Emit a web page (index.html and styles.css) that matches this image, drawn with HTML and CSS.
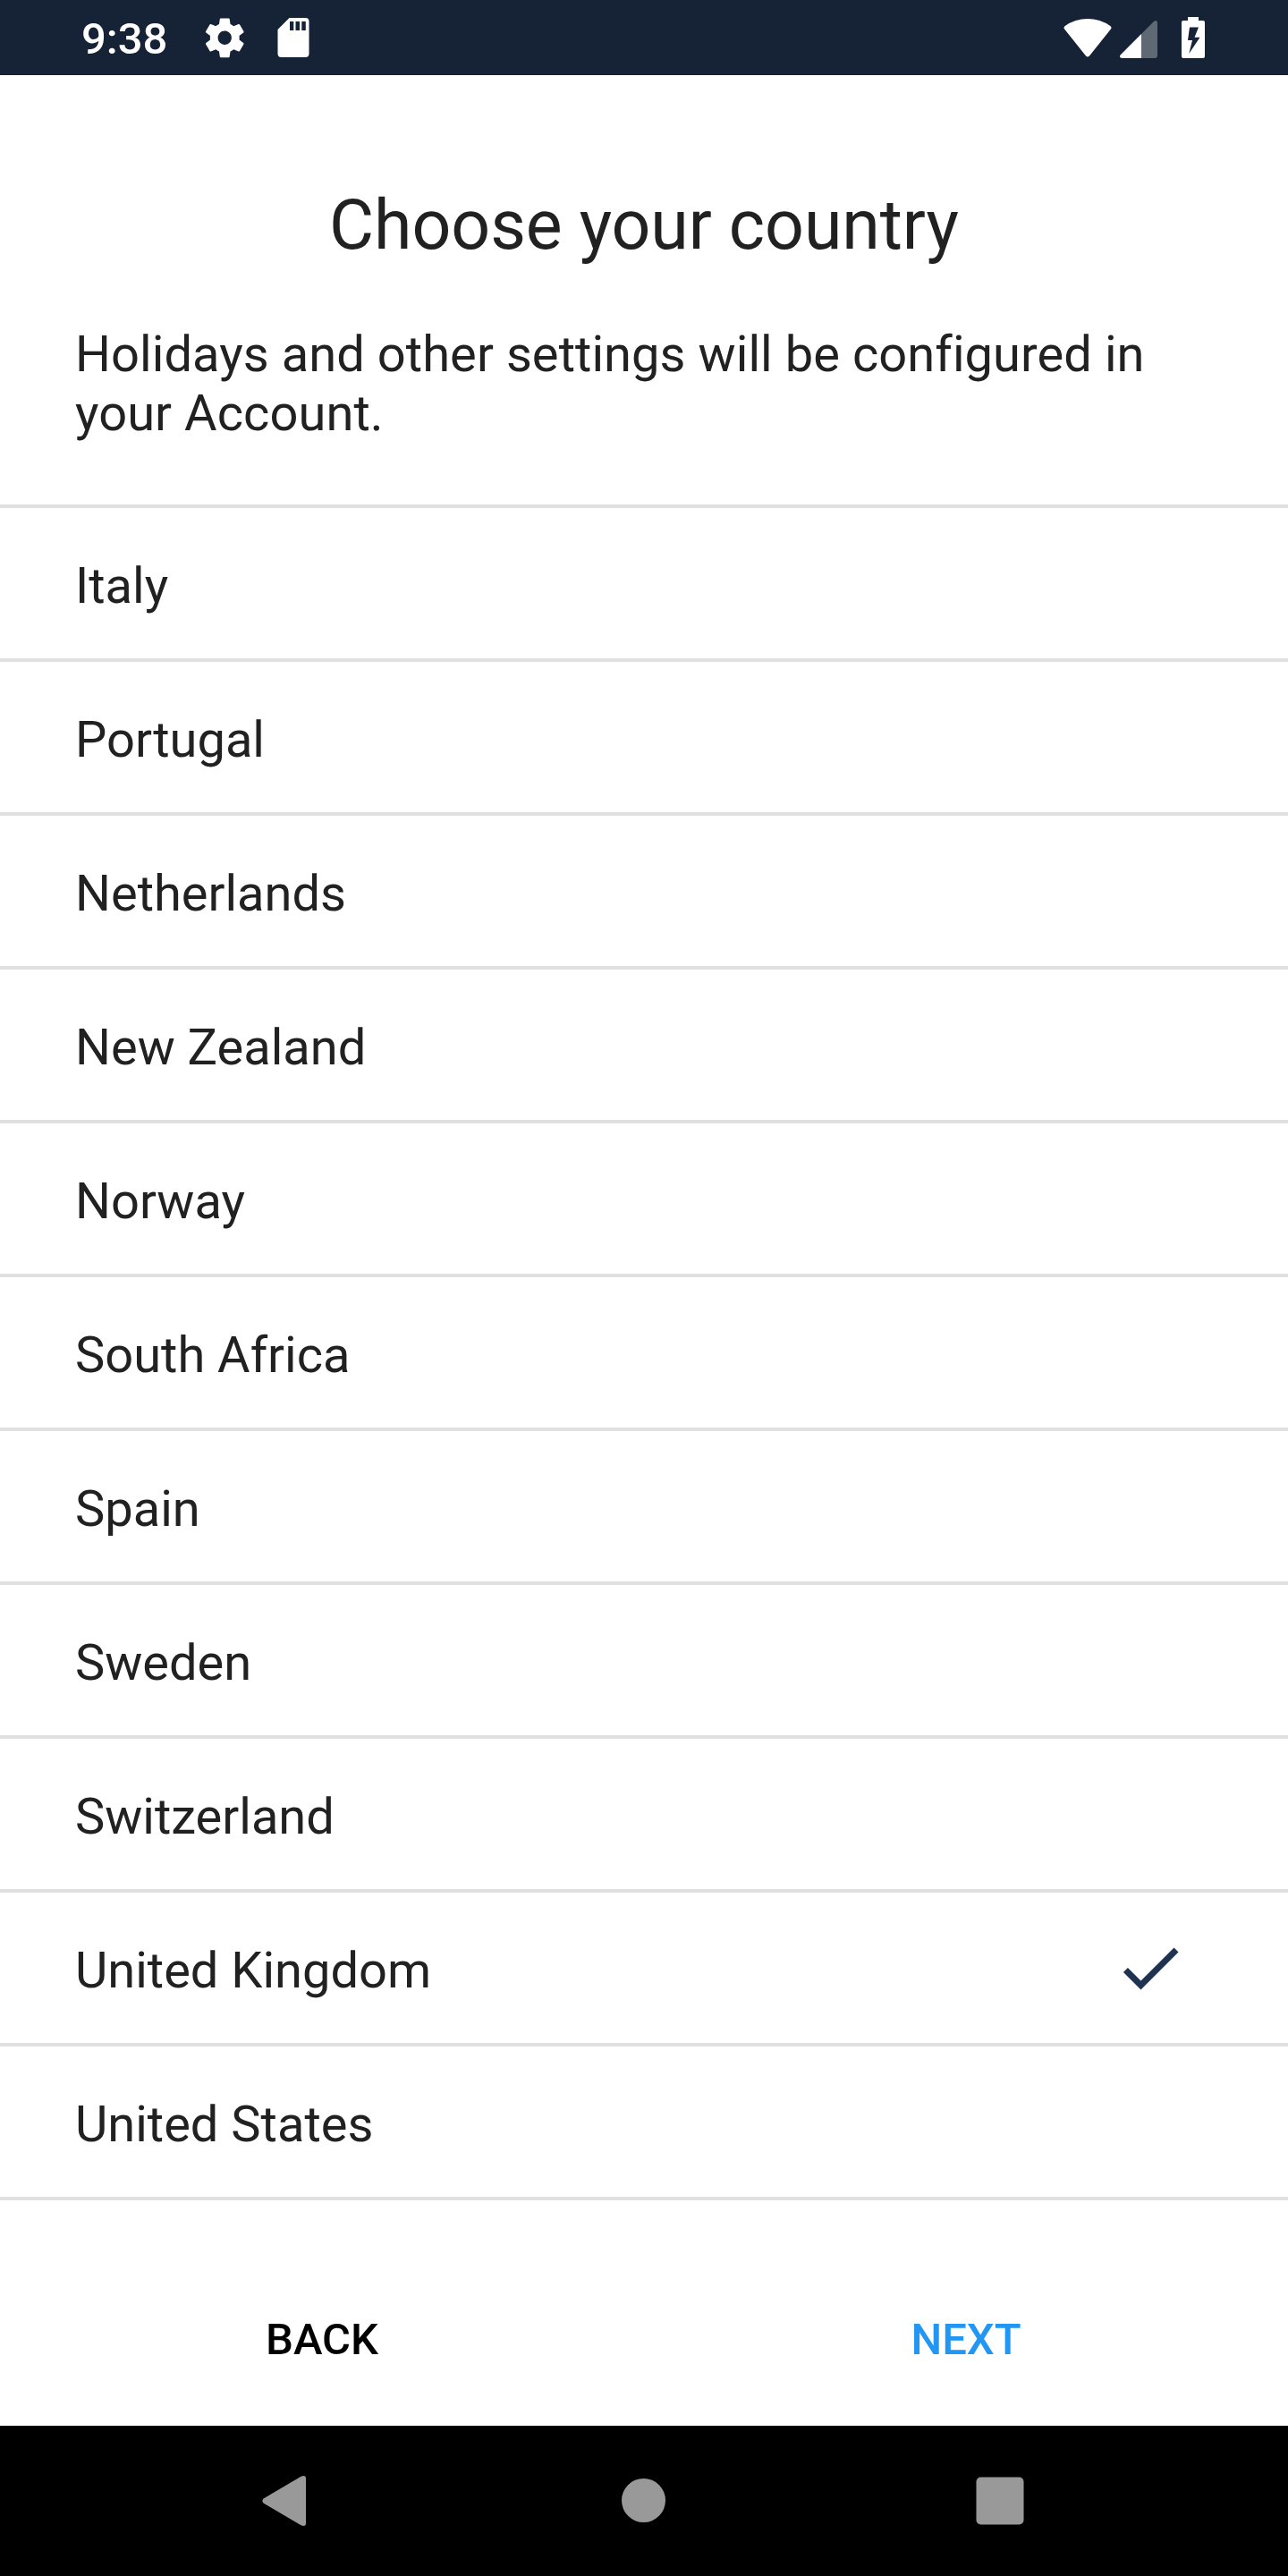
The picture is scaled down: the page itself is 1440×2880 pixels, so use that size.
FILE: index.html
```html
<!DOCTYPE html>
<html lang="en">
<head>
    <meta charset="UTF-8">
    <meta name="viewport" content="width=device-width, initial-scale=1.0">
    <title>Choose your country</title>
    <link rel="stylesheet" href="styles.css">
</head>
<body>

    <header class="status-bar">
        <span class="time">9:38</span>
        <svg class="icon-settings" width="52.5" height="52.5" viewBox="0 0 24 24" fill="#fff">
            <path d="M19.43 12.98c.04-.32.07-.64.07-.98s-.03-.66-.07-.98l2.11-1.65c.19-.15.24-.42.12-.64l-2-3.46c-.12-.22-.39-.3-.61-.22l-2.49 1c-.52-.4-1.08-.73-1.69-.98l-.38-2.65C14.46 2.18 14.25 2 14 2h-4c-.25 0-.46.18-.49.42l-.38 2.65c-.61.25-1.17.59-1.69.98l-2.49-1c-.23-.09-.49 0-.61.22l-2 3.46c-.13.22-.07.49.12.64l2.11 1.65c-.04.32-.07.65-.07.98s.03.66.07.98l-2.11 1.65c-.19.15-.24.42-.12.64l2 3.46c.12.22.39.3.61.22l2.49-1c.52.4 1.08.73 1.69.98l.38 2.65c.03.24.24.42.49.42h4c.25 0 .46-.18.49-.42l.38-2.65c.61-.25 1.17-.59 1.69-.98l2.49 1c.23.09.49 0 .61-.22l2-3.46c.12-.22.07-.49-.12-.64l-2.11-1.65zM12 15.5c-1.93 0-3.5-1.57-3.5-3.5s1.57-3.5 3.5-3.5 3.5 1.57 3.5 3.5-1.57 3.5-3.5 3.5z"/>
        </svg>
        <svg class="icon-sd" width="36" height="44" viewBox="0 0 36 44">
            <path fill="#fff" fill-rule="evenodd" d="M13.5 0H31.500q4 0 4 4V40q0 4-4 4H4.500q-4 0-4-4V13zM14 4v10h4.300V4zM20.500 4v10h4.500V4zM27.300 4v10h4.500V4z"/>
        </svg>
        <div class="status-right">
            <svg width="54" height="44" viewBox="0 0 54 44">
                <path fill="#fff" d="M1.300 11.800Q-.5 9.600 1.700 8Q13 0 27 0T52.300 8Q54.500 9.600 52.700 11.800L29 41.500Q27 43.600 25 41.500z"/>
            </svg>
            <svg class="icon-signal" width="42" height="42" viewBox="0 0 42 42">
                <path fill="#5f6973" d="M24 15L38 1Q42-1.500 42 3V39q0 3-3 3H24z"/>
                <path fill="#fff" d="M24 15V42H2.500Q-1.500 41.500 .8 38.300z"/>
            </svg>
            <svg class="icon-battery" width="26" height="46" viewBox="0 0 26 46">
                <path fill="#fff" fill-rule="evenodd" d="M7 0H19V4H24q2 0 2 2V44q0 2-2 2H2q-2 0-2-2V6q0-2 2-2H7zM9 11.500L7 26H12L8.300 41L20.500 22.700H14.500L19 11.500z"/>
            </svg>
        </div>
    </header>

    <main>
        <h1>Choose your country</h1>
        <p class="description">Holidays and other settings will be configured in your Account.</p>

        <ul class="countries">
            <li>Italy</li>
            <li>Portugal</li>
            <li>Netherlands</li>
            <li>New Zealand</li>
            <li>Norway</li>
            <li>South Africa</li>
            <li>Spain</li>
            <li>Sweden</li>
            <li>Switzerland</li>
            <li class="selected">
                United Kingdom
                <svg width="84" height="84" viewBox="0 0 24 24" fill="#1f3350">
                    <path d="M9 16.170L4.830 12l-1.420 1.410L9 19 21 7l-1.410-1.410z"/>
                </svg>
            </li>
            <li>United States</li>
        </ul>
    </main>

    <div class="actions">
        <button type="button">BACK</button>
        <button type="button" class="next">NEXT</button>
    </div>

    <footer class="nav-bar">
        <svg width="50" height="58" viewBox="0 0 50 58">
            <path fill="#999" d="M1.500 31.500Q-.7 29 1.500 26.500L43.500 1.800Q49 -.5 49 4V54Q49 58.500 43.500 56.200z"/>
        </svg>
        <svg class="icon-home" width="50" height="50" viewBox="0 0 50 50">
            <circle cx="24.5" cy="24.5" r="24.500" fill="#999"/>
        </svg>
        <svg width="54" height="54" viewBox="0 0 54 54">
            <rect x=".5" y=".5" width="53" height="53" rx="5" fill="#999"/>
        </svg>
    </footer>

</body>
</html>
```
FILE: styles.css
```css
* {
    margin: 0;
    padding: 0;
    box-sizing: border-box;
}

body {
    width: 1440px;
    height: 2880px;
    display: flex;
    flex-direction: column;
    font-family: Roboto, sans-serif;
    font-size: 56px;
    line-height: 66px;
    color: #212121;
    background-color: #fff;
}

svg {
    display: block;
    flex-shrink: 0;
}

.status-bar {
    display: flex;
    align-items: center;
    height: 84px;
    padding: 0 93px 0 91px;
    background-color: #162235;
    color: #fff;
}

.time {
    width: 134px;
    font-size: 49px;
    font-weight: 500;
    line-height: 57px;
    padding-top: 3px;
}

.icon-sd {
    margin-left: 32.5px;
}

.status-right {
    display: flex;
    align-items: flex-end;
    margin-left: auto;
}

.icon-signal {
    margin-left: 9px;
}

.icon-battery {
    margin-left: 27px;
}

h1 {
    margin-top: 123px;
    font-size: 77px;
    font-weight: 400;
    line-height: 90px;
    letter-spacing: -0.06px;
    text-align: center;
}

.description {
    margin-top: 66px;
    padding: 0 84px;
    letter-spacing: 0.07px;
}

.countries {
    margin-top: 69px;
    border-top: 4px solid #e0e0e0;
    list-style-type: none;
}

.countries li {
    display: flex;
    align-items: center;
    justify-content: space-between;
    height: 172px;
    padding: 6px 112px 0 84px;
    border-bottom: 4px solid #e0e0e0;
}

.selected svg {
    margin-top: -6px;
}

.actions {
    display: flex;
    flex: 1;
    padding-top: 58px;
}

.actions button {
    flex: 1;
    border: none;
    background: none;
    font-family: inherit;
    font-size: 49px;
    font-weight: 500;
    color: #000;
}

.actions .next {
    color: #2196f3;
}

.nav-bar {
    display: flex;
    align-items: center;
    justify-content: space-between;
    height: 168px;
    padding: 0 295px 0 293px;
    background-color: #000;
}

.icon-home {
    margin-left: 6px;
}
```
